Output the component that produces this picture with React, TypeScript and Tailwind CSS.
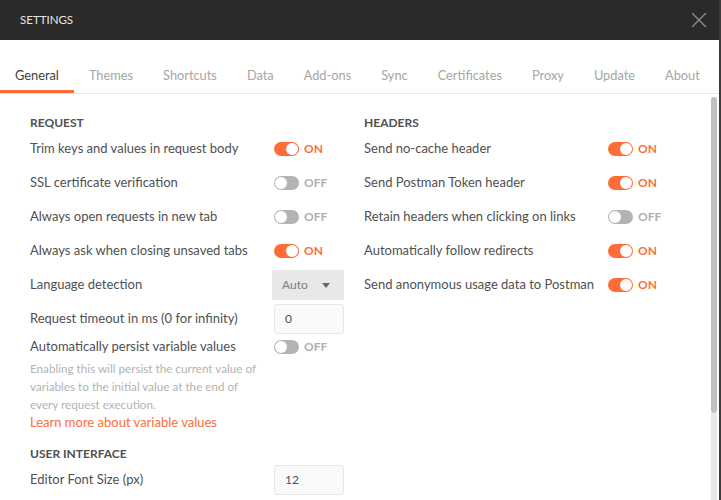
import React from 'react';
import { X } from 'lucide-react';

const ORANGE = '#ff6c37';

const tabs = ['General', 'Themes', 'Shortcuts', 'Data', 'Add-ons', 'Sync', 'Certificates', 'Proxy', 'Update', 'About'];

const Toggle: React.FC<{ on: boolean }> = ({ on }) => (
  <div className="flex items-center">
    <div
      className={
        'w-[25px] h-[14px] rounded-full p-[1px] flex ' +
        (on ? 'bg-[#ff6c37] justify-end' : 'bg-[#b3b3b3] justify-start')
      }
    >
      <div className="w-[12px] h-[12px] rounded-full bg-white" />
    </div>
    <span className={'ml-[5px] text-[12px] font-bold ' + (on ? 'text-[#ff6c37]' : 'text-[#b0b0b0]')}>
      {on ? 'ON' : 'OFF'}
    </span>
  </div>
);

const Row: React.FC<{ label: string; children: React.ReactNode; short?: boolean }> = ({ label, children, short }) => (
  <div className={'flex items-center ' + (short ? 'h-[22px]' : 'h-[34px]')}>
    <div className="w-[244px] text-[13px] text-[#505050] whitespace-nowrap">{label}</div>
    {children}
  </div>
);

const Heading: React.FC<{ children: React.ReactNode; className?: string }> = ({ children, className }) => (
  <div className={'text-[12px] leading-[18px] font-bold text-[#505050] ' + (className || '')}>{children}</div>
);

const NumberBox: React.FC<{ value: string }> = ({ value }) => (
  <div className="w-[70px] h-[30px] border border-[#e6e6e6] bg-[#fafafa] rounded-[3px] flex items-center px-[10px] text-[12px] text-[#505050]">
    {value}
  </div>
);

export default function App() {
  return (
    <div className="w-[721px] h-[500px] flex flex-col overflow-hidden bg-white border-r-2 border-[#3c3c3c] font-['Lato',sans-serif]">
      <div className="h-[40px] shrink-0 bg-[#2a2a2a] flex items-center justify-between pl-[20px] pr-[7px]">
        <span className="text-[11.5px] text-[#e6e6e6]">SETTINGS</span>
        <X size={26} strokeWidth={1.3} className="text-[#8c8c8c]" />
      </div>

      <div className="h-[54px] shrink-0 flex items-end border-b border-[#e6e6e6]">
        {tabs.map((t, i) => (
          <div
            key={t}
            className={
              'px-[15px] pb-[6px] leading-[18px] text-[12.8px] whitespace-nowrap border-b-[3px] ' +
              (i === 0 ? 'border-[#ff6c37] text-[#404040]' : 'border-transparent text-[#a6a6a6]')
            }
          >
            {t}
          </div>
        ))}
      </div>

      <div className="flex-1 flex min-h-0">
        <div className="flex-1 flex pl-[30px] pt-[20px]">
          <div className="w-[334px] shrink-0">
            <Heading>REQUEST</Heading>
            <Row label="Trim keys and values in request body"><Toggle on /></Row>
            <Row label="SSL certificate verification"><Toggle on={false} /></Row>
            <Row label="Always open requests in new tab"><Toggle on={false} /></Row>
            <Row label="Always ask when closing unsaved tabs"><Toggle on /></Row>
            <Row label="Language detection">
              <div className="-ml-[2px] w-[72px] h-[30px] bg-[#e8e8e8] flex items-center justify-between pl-[10px] pr-[14px] text-[12px] text-[#808080]">
                <span>Auto</span>
                <svg width="8" height="5" viewBox="0 0 8 5">
                  <polygon points="0,0 8,0 4,5" fill="#666" />
                </svg>
              </div>
            </Row>
            <Row label="Request timeout in ms (0 for infinity)"><NumberBox value="0" /></Row>
            <Row label="Automatically persist variable values" short><Toggle on={false} /></Row>
            <div className="w-[236px] text-[11.7px] leading-[18px] text-[#b3b3b3] pt-[1px]">
              Enabling this will persist the current value of variables to the initial value at the end of every request execution.
            </div>
            <div className="text-[13px] leading-[18px]" style={{ color: ORANGE }}>Learn more about variable values</div>
            <Heading className="mt-[14px]">USER INTERFACE</Heading>
            <Row label="Editor Font Size (px)"><NumberBox value="12" /></Row>
          </div>
          <div className="flex-1">
            <Heading>HEADERS</Heading>
            <Row label="Send no-cache header"><Toggle on /></Row>
            <Row label="Send Postman Token header"><Toggle on /></Row>
            <Row label="Retain headers when clicking on links"><Toggle on={false} /></Row>
            <Row label="Automatically follow redirects"><Toggle on /></Row>
            <Row label="Send anonymous usage data to Postman"><Toggle on /></Row>
          </div>
        </div>
        <div className="w-[6px] mr-[2px] pt-[3px] flex flex-col">
          <div className="h-[316px] rounded-[3px] bg-[#c1c1c1]" />
          <div className="flex-1 bg-[#e8e8e8]" />
        </div>
      </div>
    </div>
  );
}
